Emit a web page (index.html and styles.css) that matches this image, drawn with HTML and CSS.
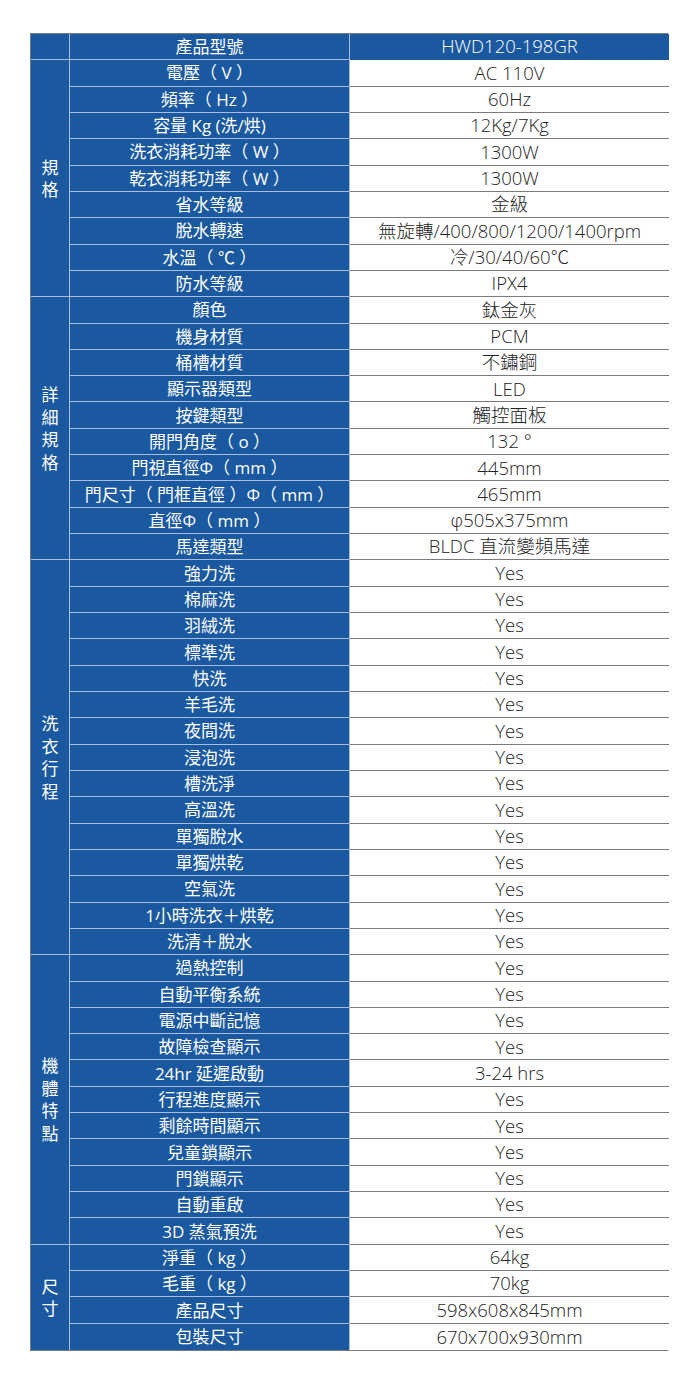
FILE: index.html
```html
<!DOCTYPE html>
<html lang="zh-Hant">
<head>
<meta charset="utf-8">
<title>HWD120-198GR 規格</title>
<link rel="stylesheet" href="styles.css">
</head>
<body>
<div class="spec">
  <div class="cat"></div>
  <div class="lbl">產品型號</div>
  <div class="val head">HWD120-198GR</div>

  <div class="cat" style="grid-row: span 9">規<br>格</div>
  <div class="lbl">電壓（ V ）</div><div class="val">AC 110V</div>
  <div class="lbl">頻率（ Hz ）</div><div class="val">60Hz</div>
  <div class="lbl">容量 Kg (洗/烘)</div><div class="val">12Kg/7Kg</div>
  <div class="lbl">洗衣消耗功率（ W ）</div><div class="val">1300W</div>
  <div class="lbl">乾衣消耗功率（ W ）</div><div class="val">1300W</div>
  <div class="lbl">省水等級</div><div class="val">金級</div>
  <div class="lbl">脫水轉速</div><div class="val">無旋轉/400/800/1200/1400rpm</div>
  <div class="lbl">水溫（ ℃ ）</div><div class="val">冷/30/40/60℃</div>
  <div class="lbl">防水等級</div><div class="val">IPX4</div>

  <div class="cat" style="grid-row: span 10">詳<br>細<br>規<br>格</div>
  <div class="lbl">顏色</div><div class="val">鈦金灰</div>
  <div class="lbl">機身材質</div><div class="val">PCM</div>
  <div class="lbl">桶槽材質</div><div class="val">不鏽鋼</div>
  <div class="lbl">顯示器類型</div><div class="val">LED</div>
  <div class="lbl">按鍵類型</div><div class="val">觸控面板</div>
  <div class="lbl">開門角度（ o ）</div><div class="val">132 °</div>
  <div class="lbl">門視直徑Φ（ mm ）</div><div class="val">445mm</div>
  <div class="lbl">門尺寸（ 門框直徑 ）Φ（ mm ）</div><div class="val">465mm</div>
  <div class="lbl">直徑Φ（ mm ）</div><div class="val">φ505x375mm</div>
  <div class="lbl">馬達類型</div><div class="val">BLDC 直流變頻馬達</div>

  <div class="cat" style="grid-row: span 15">洗<br>衣<br>行<br>程</div>
  <div class="lbl">強力洗</div><div class="val">Yes</div>
  <div class="lbl">棉麻洗</div><div class="val">Yes</div>
  <div class="lbl">羽絨洗</div><div class="val">Yes</div>
  <div class="lbl">標準洗</div><div class="val">Yes</div>
  <div class="lbl">快洗</div><div class="val">Yes</div>
  <div class="lbl">羊毛洗</div><div class="val">Yes</div>
  <div class="lbl">夜間洗</div><div class="val">Yes</div>
  <div class="lbl">浸泡洗</div><div class="val">Yes</div>
  <div class="lbl">槽洗淨</div><div class="val">Yes</div>
  <div class="lbl">高溫洗</div><div class="val">Yes</div>
  <div class="lbl">單獨脫水</div><div class="val">Yes</div>
  <div class="lbl">單獨烘乾</div><div class="val">Yes</div>
  <div class="lbl">空氣洗</div><div class="val">Yes</div>
  <div class="lbl">1小時洗衣＋烘乾</div><div class="val">Yes</div>
  <div class="lbl">洗清＋脫水</div><div class="val">Yes</div>

  <div class="cat" style="grid-row: span 11">機<br>體<br>特<br>點</div>
  <div class="lbl">過熱控制</div><div class="val">Yes</div>
  <div class="lbl">自動平衡系統</div><div class="val">Yes</div>
  <div class="lbl">電源中斷記憶</div><div class="val">Yes</div>
  <div class="lbl">故障檢查顯示</div><div class="val">Yes</div>
  <div class="lbl">24hr 延遲啟動</div><div class="val">3-24 hrs</div>
  <div class="lbl">行程進度顯示</div><div class="val">Yes</div>
  <div class="lbl">剩餘時間顯示</div><div class="val">Yes</div>
  <div class="lbl">兒童鎖顯示</div><div class="val">Yes</div>
  <div class="lbl">門鎖顯示</div><div class="val">Yes</div>
  <div class="lbl">自動重啟</div><div class="val">Yes</div>
  <div class="lbl">3D 蒸氣預洗</div><div class="val">Yes</div>

  <div class="cat last" style="grid-row: span 4">尺<br>寸</div>
  <div class="lbl">淨重（ kg ）</div><div class="val">64kg</div>
  <div class="lbl">毛重（ kg ）</div><div class="val">70kg</div>
  <div class="lbl">產品尺寸</div><div class="val">598x608x845mm</div>
  <div class="lbl last">包裝尺寸</div><div class="val last">670x700x930mm</div>
</div>
</body>
</html>
```
FILE: styles.css
```css
html, body {
  margin: 0;
  padding: 0;
  background: #ffffff;
}
body {
  padding: 33px 0 0 30px;
  font-family: "Open Sans", "Noto Sans CJK TC", sans-serif;
  font-size: 17px;
  font-weight: 400;
}
.spec {
  box-sizing: border-box;
  width: 638px;
  height: 1318px;
  display: grid;
  grid-template-columns: 39px 280px 319px;
  grid-template-rows: repeat(50, 1fr);
  border: 1px solid #7a7a7a;
}
.spec > div {
  display: flex;
  align-items: center;
  justify-content: center;
  text-align: center;
  white-space: nowrap;
  line-height: 1;
}
.cat {
  grid-column: 1;
  background: #1a58a0;
  color: #ffffff;
  border-right: 1px solid #a8bde3;
  border-bottom: 1px solid #a8bde3;
  line-height: 22.5px !important;
  font-family: "Noto Sans CJK TC", sans-serif;
}
.lbl {
  background: #1a58a0;
  color: #ffffff;
  border-right: 1px solid #a8bde3;
  border-bottom: 1px solid #a8bde3;
}
.val {
  background: #ffffff;
  color: #222222;
  font-size: 18.5px;
  font-weight: 300;
  border-bottom: 1px solid #7a7a7a;
}
.val.head {
  background: #1a58a0;
  color: #ffffff;
  border-bottom-color: #1a58a0;
}
.spec > .last {
  border-bottom: none;
}
```
